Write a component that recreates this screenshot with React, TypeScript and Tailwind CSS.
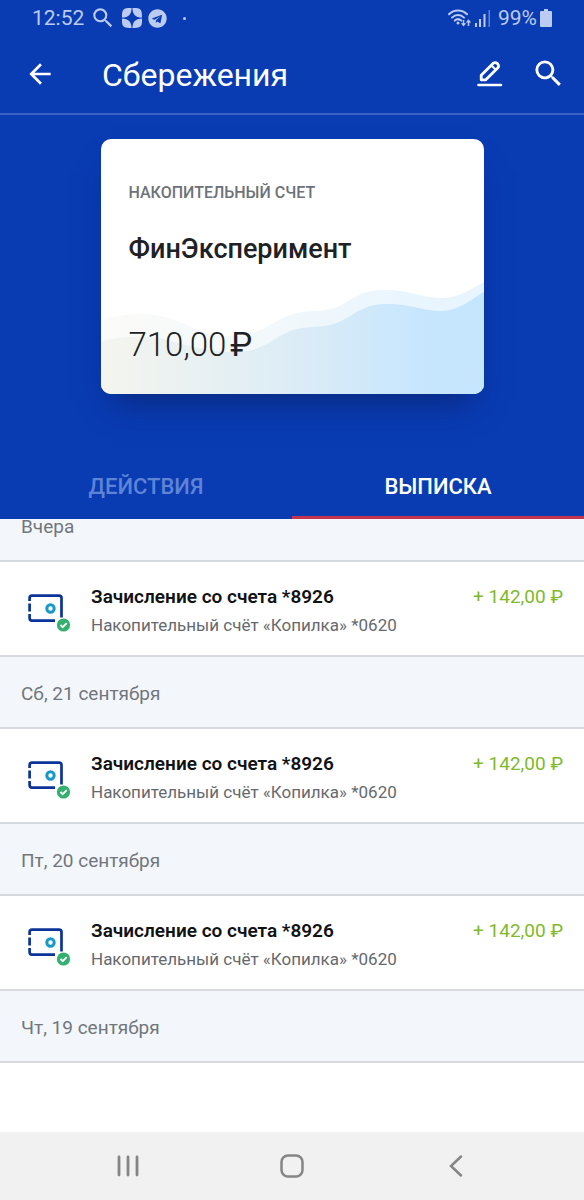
import { FaTelegram } from 'react-icons/fa'
import { MdArrowBack, MdSearch } from 'react-icons/md'

interface Operation {
    title: string
    account: string
    amount: string
}

interface DayGroup {
    date: string
    operations: Operation[]
}

const operation: Operation = {
    title: 'Зачисление со счета *8926',
    account: 'Накопительный счёт «Копилка» *0620',
    amount: '+ 142,00 ₽'
}

const groups: DayGroup[] = [
    { date: 'Вчера', operations: [operation] },
    { date: 'Сб, 21 сентября', operations: [operation] },
    { date: 'Пт, 20 сентября', operations: [operation] },
    { date: 'Чт, 19 сентября', operations: [] }
]

const SparkIcon = () => (
    <svg viewBox="0 0 20 20" className="size-5" fill="currentColor">
        <path d="M9.6 0C9.4 6.500 6.500 9.400 0 9.600C0 3 .4 .2 6 0ZM10.400 0H14C19.600 .2 20 3 20 9.600C13.500 9.400 10.600 6.500 10.400 0ZM0 10.400C6.500 10.600 9.400 13.500 9.600 20C3 20 .2 19.600 0 14ZM20 10.400V14C19.800 19.600 17 20 10.400 20C10.600 13.500 13.500 10.600 20 10.400Z" />
    </svg>
)

const WifiIcon = () => (
    <svg viewBox="0 0 24 18" className="h-[18px] w-6" fill="none" stroke="currentColor" strokeWidth="2">
        <path d="M1 5.200C6 .2 14 .2 19 5.200M4 8.600C7.500 5.200 12.500 5.200 16 8.600M6.800 11.600C8.800 9.800 11.200 9.800 13.200 11.600" strokeLinecap="round" />
        <circle cx="10" cy="14" r="1.500" fill="currentColor" stroke="none" />
        <path d="M15.500 11V16M20.500 17V12" strokeWidth="1.500" />
        <path d="M12.800 14.300H18.200L15.500 17.500ZM17.800 13.400H23.200L20.500 10.200Z" fill="currentColor" stroke="none" />
    </svg>
)

const SignalIcon = () => (
    <svg viewBox="0 0 16 18" className="h-[18px] w-4" fill="currentColor">
        <path d="M0 14h2v4H0zM4 10h2v8H4zM8.500 5h2v13h-2z" />
        <path d="M13.500 1h1.500v17h-1.500z" opacity=".5" />
    </svg>
)

const BatteryIcon = () => (
    <svg viewBox="0 0 12 18" className="h-[18px] w-3" fill="currentColor">
        <path d="M4 0H8V2H11Q12 2 12 3V17Q12 18 11 18H1Q0 18 0 17V3Q0 2 1 2H4Z" />
    </svg>
)

const EditIcon = () => (
    <svg viewBox="0 0 26 26" className="size-[26px]" fill="none" stroke="currentColor">
        <path d="M4.200 18.800V14.300L16.300 2.200Q18.300 .8 20.500 2.600Q22.400 4.800 20.900 6.800L8.800 18.800Z" strokeWidth="2.800" strokeLinejoin="round" />
        <path d="M14.200 4.200L18.800 8.800" strokeWidth="2" />
        <path d="M1.500 24H24" strokeWidth="2.600" strokeLinecap="round" />
    </svg>
)

const WalletIcon = () => (
    <svg viewBox="0 0 44 40" className="h-10 w-11 shrink-0" fill="none" strokeWidth="2.700">
        <path d="M1.600 7V4Q1.600 1.600 4 1.600H31Q33.500 1.600 33.500 4V23.500M1.600 9.500V17.500M1.600 20V24Q1.600 26.600 4 26.600H27" stroke="#0b3399" />
        <circle cx="22.500" cy="14.500" r="3.700" stroke="#1798cc" strokeWidth="3" />
        <circle cx="35.500" cy="31" r="6.600" fill="#33b06f" />
        <path d="M32.500 31L34.700 33.200L38.700 29.200" stroke="#fff" strokeWidth="1.800" />
    </svg>
)

const CardWaves = () => (
    <svg viewBox="0 0 383 255" preserveAspectRatio="none" className="absolute inset-0 size-full">
        <defs>
            <linearGradient id="wave">
                <stop offset="0" stopColor="#f5f5ee" />
                <stop offset=".5" stopColor="#dcecf6" />
                <stop offset=".85" stopColor="#c6e6fe" />
            </linearGradient>
        </defs>
        <path d="M0 180C30 174 54 172 76 182C100 192 110 197 130 197C170 197 172 173 213 172C248 172 248 151 283 151C310 151 320 159 342 159C358 159 372 149 383 143V255H0Z" fill="url(#wave)" opacity=".4" />
        <path d="M0 202C24 197 48 196 70 202C96 209 112 213 134 213C172 213 174 188 213 188C250 187 252 165 285 165C310 165 322 172 340 172C358 172 370 160 383 153V255H0Z" fill="url(#wave)" />
    </svg>
)

const StatusBar = () => (
    <div className="flex h-9 items-center justify-between px-8 text-[21px] leading-9 text-[#bccbf2]">
        <div className="flex items-center gap-[6px]">
            <span>12:52</span>
            <MdSearch className="size-[26px]" />
            <SparkIcon />
            <FaTelegram className="size-[19px]" />
            <span className="ml-[10px] size-[3px] rounded-full bg-[#bccbf2]" />
        </div>
        <div className="flex items-center gap-[3px]">
            <WifiIcon />
            <SignalIcon />
            <span className="ml-1">99%</span>
            <BatteryIcon />
        </div>
    </div>
)

const AccountCard = () => (
    <section className="relative h-[255px] overflow-hidden rounded-[10px] bg-white px-7 text-[#202124]">
        <CardWaves />
        <div className="relative">
            <p className="pt-11 text-base leading-5 font-medium text-[#6d7278]">НАКОПИТЕЛЬНЫЙ СЧЕТ</p>
            <h2 className="mt-7 text-[27px] leading-9 font-medium">ФинЭксперимент</h2>
            <p className="mt-[58px] text-[33px] leading-10 font-light">
                710,00<span className="ml-1 font-normal">₽</span>
            </p>
        </div>
    </section>
)

const operationRow = (item: Operation, index: number) => (
    <li key={index} className="flex h-[95px] items-start border-b-2 border-[#d6dade] bg-white pr-[21px] pl-7">
        <div className="pt-8">
            <WalletIcon />
        </div>
        <div className="ml-[19px] flex-1 pt-[21px]">
            <p className="text-[19px] leading-7 font-semibold text-[#111214]">{item.title}</p>
            <p className="text-[17px] leading-7 text-[#65696e]">{item.account}</p>
        </div>
        <p className="pt-[21px] text-[19px] leading-7 text-[#80b92c]">{item.amount}</p>
    </li>
)

const dayGroup = ({ date, operations }: DayGroup) => (
    <section key={date}>
        <h3 className="h-[72px] border-b-2 border-[#d6dade] bg-[#f3f7fb] px-[21px] text-[19px] leading-[74px] text-[#71767c]">
            {date}
        </h3>
        <ul>{operations.map(operationRow)}</ul>
    </section>
)

const NavBar = () => (
    <nav className="mt-auto grid h-[68px] grid-cols-[256px_1fr_256px] items-center bg-[#f1f1f1] text-[#858585]">
        <button aria-label="Недавние" className="flex justify-center">
            <svg viewBox="0 0 22 22" className="size-[22px]" stroke="currentColor" strokeWidth="2.800" strokeLinecap="round">
                <path d="M2 2V20M11 2V20M20 2V20" />
            </svg>
        </button>
        <button aria-label="Домой" className="flex justify-center">
            <svg viewBox="0 0 24 24" className="size-6" fill="none" stroke="currentColor" strokeWidth="2.500">
                <rect x="1.500" y="1.500" width="21" height="21" rx="6.500" />
            </svg>
        </button>
        <button aria-label="Назад" className="flex justify-center">
            <svg viewBox="0 0 14 22" className="h-[22px] w-[14px]" fill="none" stroke="currentColor" strokeWidth="2.500" strokeLinecap="round">
                <path d="M12 1.500L2 11L12 20.500" />
            </svg>
        </button>
    </nav>
)

export default function App() {
    return (
        <div className="flex min-h-screen flex-col bg-white font-[Roboto,sans-serif]">
            <div className="bg-[#093bb3]">
                <StatusBar />
                <header className="flex h-[79px] items-center border-b-2 border-[#3a62c3] pr-[18px] pl-6 text-white">
                    <button aria-label="Вернуться" className="pb-[2px]">
                        <MdArrowBack className="size-8" />
                    </button>
                    <h1 className="ml-[46px] flex-1 text-[32px] leading-10">Сбережения</h1>
                    <button aria-label="Изменить" className="pb-[2px]">
                        <EditIcon />
                    </button>
                    <button aria-label="Поиск" className="ml-7 pb-[2px]">
                        <MdSearch className="size-[35px]" />
                    </button>
                </header>
                <div className="pt-6">
                    <div className="mx-auto w-[383px] max-w-full rounded-[10px] shadow-[0_20px_30px_-12px_rgba(10,30,90,0.6)]">
                        <AccountCard />
                    </div>
                </div>
                <div role="tablist" className="mt-[59px] grid h-[66px] grid-cols-2 text-[22px] font-medium">
                    <button role="tab" aria-selected="false" className="border-b-[3px] border-transparent pt-1 text-[#5f84d6]">
                        ДЕЙСТВИЯ
                    </button>
                    <button role="tab" aria-selected="true" className="border-b-[3px] border-[#c4344f] pt-1 text-white">
                        ВЫПИСКА
                    </button>
                </div>
            </div>
            <main className="overflow-hidden">
                {/* the list is scrolled a little under the tabs */}
                <div className="-mt-[29px]">{groups.map(dayGroup)}</div>
            </main>
            <NavBar />
        </div>
    )
}
